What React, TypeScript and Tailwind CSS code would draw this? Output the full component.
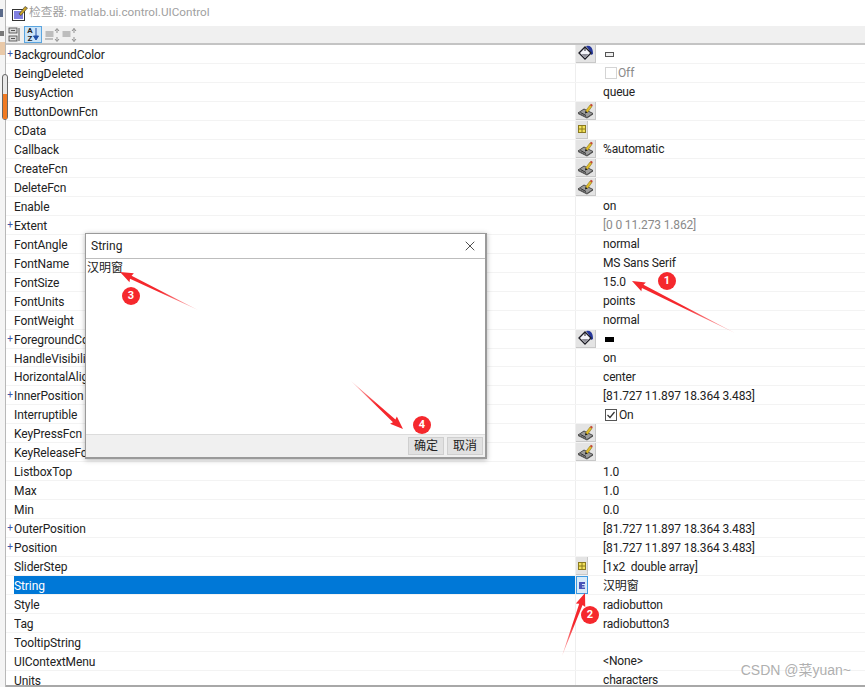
import React from 'react';
import { X } from 'lucide-react';

type Row = { name: string; plus?: boolean; icon?: 'paint' | 'pen' | 'grid' | 'text'; value?: React.ReactNode; muted?: boolean; selected?: boolean };

const PaintIcon = () => (
  <svg width="18" height="17" viewBox="0 0 18 17">
    <path d="M9 1 Q12 0 14 2 Q16 4 16 9 L14 10 L12 5 Z" fill="#26379a" />
    <path d="M2 8 L8 2 L14 8 L8 14 Z" fill="#f4f4f8" stroke="#1c1c24" strokeWidth="1.3" />
    <path d="M4.5 9 L11.5 9 L8 12.5 Z" fill="#8d8d96" />
    <path d="M8 2 V6" stroke="#1c1c24" strokeWidth="1" />
  </svg>
);

const PenIcon = () => (
  <svg width="18" height="17" viewBox="0 0 18 17">
    <path d="M1 11 L7 7 L16 11.5 L10 15.5 Z" fill="#9c9c9c" stroke="#3c3c3c" strokeWidth="0.9" />
    <path d="M1 11.5 L10 16 L16 12" fill="none" stroke="#555" strokeWidth="1" />
    <path d="M3.5 10.5 L9 13.5" stroke="#2c2c2c" strokeWidth="1" />
    <path d="M8.5 9 L13 3 L15 4.5 L10.5 10.5 Z" fill="#e0bd2a" stroke="#7a6414" strokeWidth="0.5" />
    <path d="M13 3 L15 4.5 L15.8 3 L14 1.8 Z" fill="#c4402e" />
    <path d="M8.5 9 L8 11.5 L10.5 10.5 Z" fill="#111" />
  </svg>
);

const GridIcon = () => (
  <svg width="8" height="8" viewBox="0 0 8 8">
    <rect x="0.5" y="0.5" width="7" height="7" fill="#f2e15a" stroke="#8a7a20" />
    <path d="M4 0.5 V7.5 M0.5 4 H7.5" stroke="#8a7a20" />
  </svg>
);

const TextIcon = () => (
  <svg width="8" height="9" viewBox="0 0 8 9">
    <path d="M1 1 H7 V3 H4 V4 H6.5 V5.5 H4 V6.5 H7 V8 H1 Z" fill="#4a55b8" />
  </svg>
);

const rows: Row[] = [
  { name: 'BackgroundColor', plus: true, icon: 'paint', value: <span className="block w-[9px] h-[5px] ml-[2px] border border-[#555] bg-[#f0f0f0]" /> },
  {
    name: 'BeingDeleted',
    value: (
      <span className="flex items-center ml-[2px] text-[#8a8a8a]">
        <span className="w-[12px] h-[12px] border border-[#d4d4d4] mr-[1px]" />
        Off
      </span>
    ),
  },
  { name: 'BusyAction', value: 'queue' },
  { name: 'ButtonDownFcn', icon: 'pen' },
  { name: 'CData', icon: 'grid' },
  { name: 'Callback', icon: 'pen', value: '%automatic' },
  { name: 'CreateFcn', icon: 'pen' },
  { name: 'DeleteFcn', icon: 'pen' },
  { name: 'Enable', value: 'on' },
  { name: 'Extent', plus: true, value: '[0 0 11.273 1.862]', muted: true },
  { name: 'FontAngle', value: 'normal' },
  { name: 'FontName', value: 'MS Sans Serif' },
  { name: 'FontSize', value: '15.0' },
  { name: 'FontUnits', value: 'points' },
  { name: 'FontWeight', value: 'normal' },
  { name: 'ForegroundColor', plus: true, icon: 'paint', value: <span className="block w-[9px] h-[5px] ml-[2px] bg-black" /> },
  { name: 'HandleVisibility', value: 'on' },
  { name: 'HorizontalAlignment', value: 'center' },
  { name: 'InnerPosition', plus: true, value: '[81.727 11.897 18.364 3.483]' },
  {
    name: 'Interruptible',
    value: (
      <span className="flex items-center ml-[2px]">
        <span className="w-[12px] h-[12px] border border-[#555] mr-[2px] flex items-center justify-center">
          <svg width="10" height="10" viewBox="0 0 10 10">
            <path d="M1.5 5 L4 7.5 L8.5 2" fill="none" stroke="#333" strokeWidth="1.2" />
          </svg>
        </span>
        On
      </span>
    ),
  },
  { name: 'KeyPressFcn', icon: 'pen' },
  { name: 'KeyReleaseFcn', icon: 'pen' },
  { name: 'ListboxTop', value: '1.0' },
  { name: 'Max', value: '1.0' },
  { name: 'Min', value: '0.0' },
  { name: 'OuterPosition', plus: true, value: '[81.727 11.897 18.364 3.483]' },
  { name: 'Position', plus: true, value: '[81.727 11.897 18.364 3.483]' },
  { name: 'SliderStep', icon: 'grid', value: '[1x2  double array]' },
  { name: 'String', icon: 'text', value: '汉明窗', selected: true },
  { name: 'Style', value: 'radiobutton' },
  { name: 'Tag', value: 'radiobutton3' },
  { name: 'TooltipString' },
  { name: 'UIContextMenu', value: '<None>' },
  { name: 'Units', value: 'characters' },
];

const RowIcon = ({ row }: { row: Row }) => {
  if (!row.icon) return null;
  if (row.icon === 'grid') {
    return (
      <span className="w-[12px] h-[18px] bg-[#e4e4e4] border-r border-b border-[#c8c8c8] flex items-center justify-center">
        <GridIcon />
      </span>
    );
  }
  if (row.icon === 'text') {
    return (
      <span className="w-[12px] h-[18px] bg-[#d8ebfa] border border-[#3f9ae0] flex items-center justify-center">
        <TextIcon />
      </span>
    );
  }
  return (
    <span className="w-[20px] h-[18px] bg-[#e4e4e4] border-r border-b border-[#c8c8c8] flex items-center justify-center">
      {row.icon === 'paint' ? <PaintIcon /> : <PenIcon />}
    </span>
  );
};

const Arrow = ({ tip, tail }: { tip: [number, number]; tail: [number, number] }) => {
  const [tx, ty] = tip;
  const dx = tail[0] - tx;
  const dy = tail[1] - ty;
  const len = Math.hypot(dx, dy);
  const ux = dx / len;
  const uy = dy / len;
  const px = -uy;
  const py = ux;
  const id = `a${tx}`;
  const pts = [
    [tx, ty],
    [tx + ux * 13 + px * 5, ty + uy * 13 + py * 5],
    [tx + ux * 12 + px * 1.8, ty + uy * 12 + py * 1.8],
    [tail[0], tail[1]],
    [tx + ux * 12 - px * 1.8, ty + uy * 12 - py * 1.8],
    [tx + ux * 13 - px * 5, ty + uy * 13 - py * 5],
  ]
    .map((p) => p.join(','))
    .join(' ');
  return (
    <>
      <linearGradient id={id} gradientUnits="userSpaceOnUse" x1={tx} y1={ty} x2={tail[0]} y2={tail[1]}>
        <stop offset="0.5" stopColor="#f5282d" />
        <stop offset="1" stopColor="#f5282d" stopOpacity="0.25" />
      </linearGradient>
      <polygon points={pts} fill={`url(#${id})`} />
    </>
  );
};

const badges = [
  { n: '1', x: 667, y: 281 },
  { n: '2', x: 590, y: 615 },
  { n: '3', x: 131, y: 296 },
  { n: '4', x: 422, y: 425 },
];

export default function App() {
  return (
    <div className="relative w-[865px] h-[687px] overflow-hidden bg-white flex text-[12px] text-[#222] font-['Roboto','Noto_Sans_CJK_SC',sans-serif]">
      {/* strip of the window behind */}
      <div className="relative w-[6px] shrink-0 bg-[#f4f4f4] border-r border-[#b8b8b8]">
        <div className="absolute left-0 top-[9px] w-[3px] h-[8px] bg-[#5a6a8a]" />
        <div className="absolute left-0 top-[31px] w-[4px] h-[5px] bg-[#777]" />
        <div className="absolute left-0 top-[42px] w-[5px] h-[13px] bg-[#e9c9a8]" />
        <div className="absolute left-[2px] top-[74px] w-[6px] h-[46px] rounded-[3px] border border-[#666] bg-[#e8e8e8] z-10">
          <div className="mt-[19px] h-[25px] bg-[#f07a22]" />
        </div>
      </div>

      <div className="flex-1 flex flex-col min-w-0">
        <div className="h-[26px] flex items-center pl-[6px] gap-[1px] bg-white text-[#a0a0a0] text-[11.7px]">
          <svg width="16" height="16" viewBox="0 0 16 16">
            <rect x="0.5" y="4.5" width="12" height="11" fill="#fff" stroke="#333" />
            <rect x="2" y="6" width="9" height="8" fill="#8080e0" />
            <path d="M7 9 L13 1.5 L15.5 3 L9 10.5 Z" fill="#c9a227" stroke="#333" strokeWidth="0.6" />
          </svg>
          <span className="whitespace-pre">检查器: matlab.ui.control.UIControl</span>
        </div>

        <div className="h-[19px] flex items-center pl-[1px] bg-[#f0f0f0] border-b-2 border-[#c4c4c4]">
          <span className="w-[15px] h-[16px] flex items-center justify-center">
            <svg width="14" height="15" viewBox="0 0 14 15">
              <rect x="1" y="1" width="8" height="5" fill="#d8d8d8" stroke="#444" strokeWidth="0.8" />
              <rect x="1" y="9" width="8" height="5" fill="#d8d8d8" stroke="#444" strokeWidth="0.8" />
              <path d="M11 1 V14 M3 3.5 H7 M3 11.5 H7" stroke="#555" />
            </svg>
          </span>
          <span className="ml-[2px] w-[18px] h-[17px] flex items-center justify-center bg-[#cce4f7] border border-[#5aa5e0] text-[8px] leading-[8px] font-bold text-[#222]">
            <span className="flex flex-col items-center">
              <span>A</span>
              <span>Z</span>
            </span>
            <svg width="6" height="13" viewBox="0 0 6 13">
              <path d="M3 0 V9 M0.5 8 L3 12 L5.5 8 Z" fill="#1f4fa8" stroke="#1f4fa8" />
            </svg>
          </span>
          <svg className="ml-[3px]" width="15" height="14" viewBox="0 0 15 14">
            <rect x="0.5" y="3" width="8" height="6" fill="#bdbdbd" />
            <path d="M0 11 H8 M12 1 V5 M10 3 L12 0.5 L14 3 M12 13 V9 M10 11 L12 13.5 L14 11" stroke="#8f8f8f" fill="none" />
          </svg>
          <svg className="ml-[2px]" width="15" height="14" viewBox="0 0 15 14">
            <rect x="0.5" y="3" width="8" height="6" fill="#bdbdbd" />
            <path d="M12 0.5 V5 M10 3 L12 0.5 L14 3 M12 13.5 V9 M10 11 L12 13.5 L14 11" stroke="#8f8f8f" fill="none" />
          </svg>
        </div>

        <div className="flex-1 min-h-0 overflow-hidden border-b-2 border-[#a8a8a8]">
          {rows.map((row) => (
            <div key={row.name} className="h-[18.97px] flex border-b border-[#f3f3f3] leading-[20px]">
              <div className="w-[8px] shrink-0 flex items-center justify-center text-[#3a55a8] text-[10px] leading-none">
                {row.plus ? '+' : ''}
              </div>
              <div className={`w-[562px] shrink-0 border-r border-[#eeeeee] whitespace-nowrap overflow-hidden tracking-[-0.1px] ${row.selected ? 'bg-[#0078d7] text-white' : ''}`}>
                {row.name}
              </div>
              <div className="w-[27px] shrink-0 flex items-start">
                <RowIcon row={row} />
              </div>
              <div className={`flex-1 flex items-center whitespace-pre pt-px tracking-[-0.15px] ${row.muted ? 'text-[#8a8a8a]' : ''}`}>{row.value}</div>
            </div>
          ))}
        </div>
      </div>

      {/* String dialog */}
      <div className="absolute left-[85px] top-[233px] w-[402px] h-[226px] flex flex-col bg-white border-2 border-t border-l border-[#9a9a9a] shadow-[0_1px_5px_rgba(0,0,0,0.3)]">
        <div className="h-[25px] shrink-0 flex items-center justify-between pl-[5px] pr-[7px] border-b border-[#bdbdbd]">
          <span>String</span>
          <X size={16} strokeWidth={1.2} className="text-[#222]" />
        </div>
        <div className="flex-1 pl-px pt-[1px] leading-[17px]">汉明窗</div>
        <div className="h-[23px] shrink-0 flex items-center justify-end gap-[3px] pr-[2px] bg-[#f0f0f0] border-t border-[#dcdcdc]">
          <span className="w-[36px] h-[18px] flex items-center justify-center bg-[#e1e1e1] border border-[#cfcfcf]">确定</span>
          <span className="w-[36px] h-[18px] flex items-center justify-center bg-[#e1e1e1] border border-[#cfcfcf]">取消</span>
        </div>
      </div>

      {/* annotations */}
      <svg className="absolute inset-0 pointer-events-none" width="865" height="687">
        <Arrow tip={[632, 281]} tail={[735, 333]} />
        <Arrow tip={[585, 593]} tail={[562, 656]} />
        <Arrow tip={[120, 272]} tail={[198, 310]} />
        <Arrow tip={[403, 429]} tail={[351, 381]} />
      </svg>
      {badges.map((b) => (
        <span
          key={b.n}
          className="absolute w-[18px] h-[18px] rounded-full bg-[#f5282d] text-white text-[11px] font-bold flex items-center justify-center"
          style={{ left: b.x - 9, top: b.y - 9 }}
        >
          {b.n}
        </span>
      ))}

      <span className="absolute right-[14px] top-[661px] text-[14px] leading-[18px] text-[#9a9a9a]/80 font-['Liberation_Sans','Noto_Sans_CJK_SC',sans-serif]">CSDN @菜yuan~</span>
    </div>
  );
}
